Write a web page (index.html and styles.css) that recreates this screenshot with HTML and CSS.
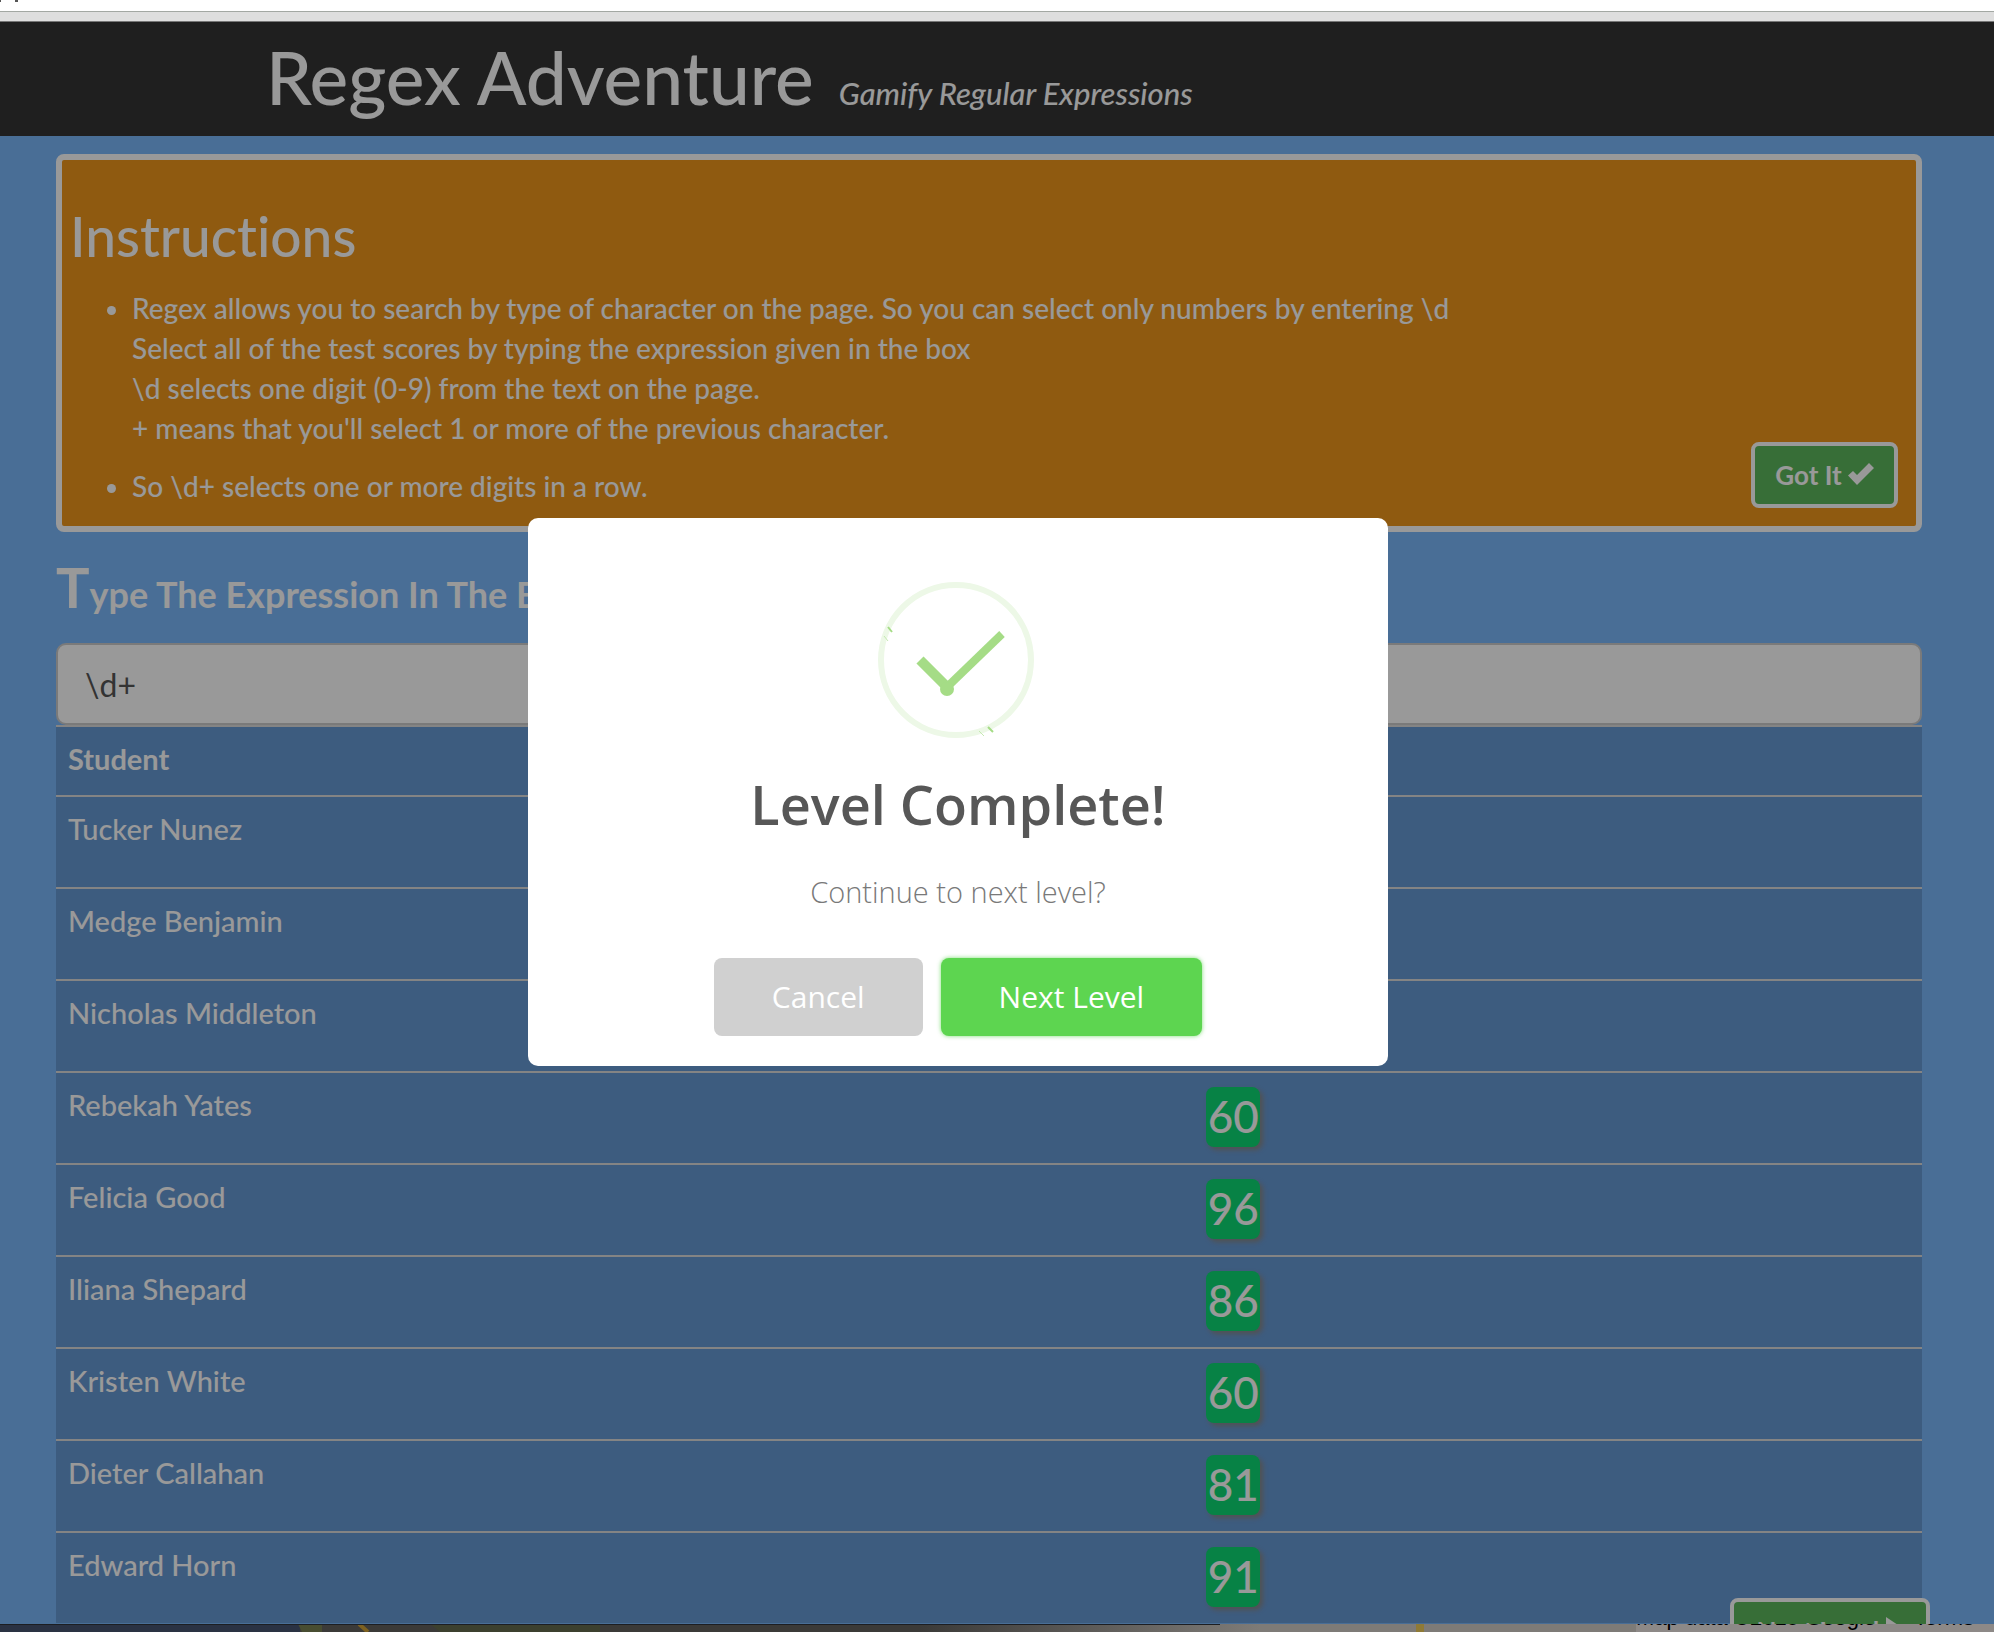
FILE: index.html
```html
<!DOCTYPE html>
<html lang="en">
<head>
    <meta charset="UTF-8">
    <meta name="viewport" content="width=device-width, initial-scale=1.0">
    <title>Regex Adventure</title>
    <link rel="stylesheet" href="styles.css">
</head>
<body>
    <div class="toolbar"><span class="toolbar-marks"></span></div>
    <div class="toolbar-edge"></div>

    <div class="page">
        <header class="header">
            <h1>Regex Adventure</h1>
            <em>Gamify Regular Expressions</em>
        </header>

        <main class="content">
            <section class="instructions">
                <h2>Instructions</h2>
                <ul>
                    <li>Regex allows you to search by type of character on the page. So you can select only numbers by entering \d<br>
                        Select all of the test scores by typing the expression given in the box<br>
                        \d selects one digit (0-9) from the text on the page.<br>
                        + means that you'll select 1 or more of the previous character.</li>
                    <li>So \d+ selects one or more digits in a row.</li>
                </ul>
                <button class="btn got-it" type="button">Got It
                    <svg width="26" height="22" viewBox="0 0 26 22"><path d="M0 12.500L5 8L9 12L21 0L26 5L9 22Z" fill="currentColor"/></svg>
                </button>
            </section>

            <label class="prompt" for="expression">Type The Expression In The Box</label>
            <input class="expression" type="text" id="expression" value="\d+">

            <table class="scores">
                <thead>
                    <tr><th>Student</th><th>Score</th></tr>
                </thead>
                <tbody>
                    <tr><td>Tucker Nunez</td><td><span class="match">75</span></td></tr>
                    <tr><td>Medge Benjamin</td><td><span class="match">88</span></td></tr>
                    <tr><td>Nicholas Middleton</td><td><span class="match">92</span></td></tr>
                    <tr><td>Rebekah Yates</td><td><span class="match">60</span></td></tr>
                    <tr><td>Felicia Good</td><td><span class="match">96</span></td></tr>
                    <tr><td>Iliana Shepard</td><td><span class="match">86</span></td></tr>
                    <tr><td>Kristen White</td><td><span class="match">60</span></td></tr>
                    <tr><td>Dieter Callahan</td><td><span class="match">81</span></td></tr>
                    <tr><td>Edward Horn</td><td><span class="match">91</span></td></tr>
                </tbody>
            </table>
        </main>

        <button class="btn next" type="button">Next Level
            <svg width="18" height="24" viewBox="0 0 18 24"><path d="M0 0L18 12L0 24Z" fill="currentColor"/></svg>
        </button>

        <div class="overlay"></div>

        <div class="alert" role="dialog" aria-labelledby="alert-title">
            <svg class="alert-icon" width="160" height="156" viewBox="0 0 160 156" fill="none">
                <circle cx="78" cy="78" r="75" stroke="#edf8e7" stroke-width="6"/>
                <path d="M42 78L69 105" stroke="#a5dc86" stroke-width="10"/>
                <path d="M67 107L124 52" stroke="#a5dc86" stroke-width="8"/>
                <circle cx="69" cy="107" r="7" fill="#a5dc86"/>
                <path d="M10 45L14 50M110 145L115 150" stroke="#a5dc86" stroke-width="2"/>
                <path d="M6 54L10 59M101 149L106 154" stroke="#c5e9b2" stroke-width="1"/>
            </svg>
            <h2 id="alert-title">Level Complete!</h2>
            <p>Continue to next level?</p>
            <div class="alert-buttons">
                <button class="cancel" type="button">Cancel</button>
                <button class="confirm" type="button">Next Level</button>
            </div>
        </div>
    </div>

    <footer class="map">
        <svg class="map-tiles" viewBox="0 0 1994 8" preserveAspectRatio="none">
            <defs>
                <linearGradient id="shade">
                    <stop offset="0" stop-color="#3b3a38"/>
                    <stop offset="1" stop-color="#7e7b77"/>
                </linearGradient>
            </defs>
            <rect width="1994" height="8" fill="#3b3a38"/>
            <rect width="300" height="8" fill="#2a3243"/>
            <path d="M298 0H322V8H302Z" fill="#484d31"/>
            <path d="M430 0H600V8H440Z" fill="#3c402e"/>
            <path d="M359 0L368 8" stroke="#7d6120" stroke-width="4"/>
            <rect x="920" width="340" height="8" fill="url(#shade)"/>
            <rect x="1260" width="734" height="8" fill="#7e7b77"/>
            <rect x="1416" width="8" height="8" fill="#8f7a36"/>
            <rect x="1636" width="358" height="8" fill="#8d8987"/>
            <rect width="1220" height="1" fill="#1c1e22"/>
        </svg>
        <span class="map-credit"><span>Map data ©2015 Google</span><span>Terms</span></span>
    </footer>
</body>
</html>
```
FILE: styles.css
```css
* {
    box-sizing: border-box;
}

body {
    margin: 0;
    height: 100vh;
    display: flex;
    flex-direction: column;
    overflow: hidden;
    font-family: Lato, sans-serif;
    font-size: 28px;
    font-weight: 500;
    font-variant-ligatures: none;
    line-height: 40px;
    color: #fff;
    background-color: #7bb7fa;
}

h1, h2, p, ul {
    margin: 0;
    font-weight: inherit;
}

button, input {
    font-family: inherit;
}

/* browser chrome above the page */
.toolbar {
    flex: none;
    height: 12px;
    background-color: #fff;
    border-bottom: 1px solid #a3a8a3;
}

.toolbar-marks {
    display: block;
    width: 18px;
    height: 2px;
    border-left: 1px solid #555;
    border-right: 3px solid #555;
}

.toolbar-edge {
    flex: none;
    height: 10px;
    background-color: #dedede;
    border-bottom: 1px solid #777;
}

.page {
    position: relative;
    flex: 1;
    min-height: 0;
    overflow: hidden;
}

.header {
    display: flex;
    align-items: baseline;
    gap: 25px;
    height: 114px;
    padding: 10px 0 0 266px;
    background-color: #343434;
}

.header h1 {
    font-size: 73px;
    line-height: 90px;
}

.header em {
    font-size: 31px;
}

.content {
    padding: 18px 72px 0 56px;
}

.instructions {
    position: relative;
    height: 378px;
    padding: 42px 8px 0;
    border: 6px solid #fff;
    border-radius: 8px;
    background-color: #ee961c;
}

.instructions h2 {
    font-size: 55px;
    line-height: 68px;
}

.instructions ul {
    padding: 18px 0 0 62px;
}

.instructions li + li {
    margin-top: 18px;
}

.btn {
    border: 4px solid #fff;
    border-radius: 8px;
    background-color: #5cb85c;
    color: #fff;
    font-size: 26px;
    font-weight: bold;
}

.got-it {
    position: absolute;
    right: 18px;
    bottom: 18px;
    height: 66px;
    padding: 0 20px;
}

.prompt {
    display: block;
    margin-bottom: 14px;
    padding-top: 20px;
    font-size: 36px;
    font-weight: bold;
    line-height: 70px;
}

.prompt::first-letter {
    font-size: 56px;
}

.expression {
    display: block;
    width: 100%;
    height: 82px;
    padding: 0 27px;
    border: 2px solid #ccc;
    border-radius: 10px;
    background-color: #fff;
    color: #555;
    font-size: 32px;
}

.scores {
    width: 100%;
    border-collapse: separate;
    border-spacing: 0;
    background-color: #6799d4;
    font-size: 29px;
}

.scores th,
.scores td {
    width: 61%;
    padding: 12px 12px 16px;
    border-top: 2px solid #ddd;
    text-align: left;
    vertical-align: top;
}

.scores th + th,
.scores td + td {
    width: 39%;
}

.match {
    display: block;
    width: 54px;
    margin-top: 2px;
    padding-bottom: 2px;
    border-radius: 8px;
    background-color: #0cd973;
    box-shadow: 3px 3px 5px #888;
    font-size: 44px;
    line-height: 58px;
    text-align: center;
}

.next {
    position: absolute;
    right: 64px;
    bottom: -40px;
    width: 200px;
    height: 66px;
    padding: 0;
}

.overlay {
    position: absolute;
    inset: 0;
    background-color: rgba(0, 0, 0, 0.4);
}

.alert {
    position: absolute;
    top: 496px;
    left: calc(50% - 469px);
    width: 860px;
    height: 548px;
    padding-top: 64px;
    border-radius: 10px;
    background-color: #fff;
    font-family: "Open Sans", sans-serif;
    text-align: center;
}

.alert-icon {
    display: block;
    margin: 0 auto;
}

.alert h2 {
    margin-top: 26px;
    color: #575757;
    font-size: 54px;
    font-weight: 600;
    line-height: 80px;
}

.alert p {
    margin-top: 28px;
    color: #797979;
    font-size: 29px;
    font-weight: 300;
}

.alert-buttons {
    display: flex;
    justify-content: center;
    gap: 18px;
    margin-top: 46px;
}

.alert button {
    height: 78px;
    padding: 0 58px 2px;
    border: none;
    border-radius: 8px;
    color: #fff;
    font-size: 30px;
    font-weight: 500;
}

.alert .cancel {
    background-color: #d0d0d0;
}

.alert .confirm {
    background-color: #5dd550;
    box-shadow: 0 0 4px rgba(93, 213, 80, 0.8);
}

.map {
    position: relative;
    flex: none;
    height: 8px;
    overflow: hidden;
    color: #000;
    font-family: "Liberation Sans", Arial, sans-serif;
    font-size: 22px;
    line-height: 0;
}

.map-tiles {
    display: block;
    width: 100%;
    height: 8px;
}

.map-credit {
    position: absolute;
    top: -6px;
    right: 20px;
    display: flex;
    gap: 38px;
}
```
